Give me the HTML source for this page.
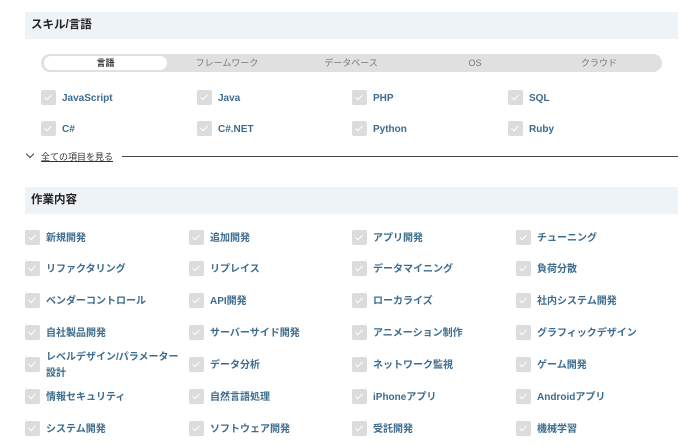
<!DOCTYPE html>
<html><head><meta charset="utf-8"><style>
body{margin:0;width:700px;height:447px;background:#fff;position:relative;overflow:hidden;font-family:"Liberation Sans","Noto Sans CJK JP",sans-serif}
.hd{position:absolute;left:25px;width:653px;height:27px;background:#eef3f8;font-size:11.5px;font-weight:bold;color:#222;line-height:27px;padding-left:6px;box-sizing:border-box}
.tabs{position:absolute;left:41px;top:54px;width:621px;height:18px;background:#e0e0e0;border-radius:9px}
.tab{position:absolute;top:0;width:124px;height:18px;line-height:18px;text-align:center;font-size:9px;color:#777}
.act{left:3px;top:2px;width:123px;height:14px;line-height:14px;background:#fff;border-radius:7px;color:#333;font-weight:bold}
.it{position:absolute;font-size:10px;font-weight:bold;color:#3d6c8e;line-height:15px}
.cb{position:absolute;width:15px;height:15px;background:#dcdcdc;border-radius:2px}
.cb:after{content:"";position:absolute;left:5px;top:3px;width:3px;height:6px;border:solid #fff;border-width:0 1.5px 1.5px 0;transform:rotate(45deg)}
</style></head><body>
<div class="hd" style="top:12px">スキル/言語</div>
<div class="tabs">
<div class="tab act">言語</div>
<div class="tab" style="left:124px">フレームワーク</div>
<div class="tab" style="left:248px">データベース</div>
<div class="tab" style="left:372px">OS</div>
<div class="tab" style="left:496px">クラウド</div>
</div>
<div style="position:absolute;left:27px;top:151px;width:5px;height:5px;border:solid #444;border-width:0 1px 1px 0;transform:rotate(45deg)"></div>
<div style="position:absolute;left:41px;top:151px;font-size:9px;color:#333;text-decoration:underline;line-height:12px">全ての項目を見る</div>
<div style="position:absolute;left:122px;top:156px;width:556px;height:1px;background:#444"></div>
<div class="hd" style="top:187px">作業内容</div>
<div id="wk"></div>
<script>
var s=[["JavaScript","Java","PHP","SQL"],["C#","C#.NET","Python","Ruby"]];
var sx=[41,197,352,508],sy=[97,128],h="";
s.forEach(function(r,i){r.forEach(function(t,j){h+='<div class="cb" style="left:'+sx[j]+'px;top:'+(sy[i]-7)+'px"></div><div class="it" style="left:'+(sx[j]+21)+'px;top:'+(sy[i]-6)+'px">'+t+'</div>'})});
var w=[["新規開発","追加開発","アプリ開発","チューニング"],["リファクタリング","リプレイス","データマイニング","負荷分散"],["ベンダーコントロール","API開発","ローカライズ","社内システム開発"],["自社製品開発","サーバーサイド開発","アニメーション制作","グラフィックデザイン"],["レベルデザイン/パラメーター<br>設計","データ分析","ネットワーク監視","ゲーム開発"],["情報セキュリティ","自然言語処理","iPhoneアプリ","Androidアプリ"],["システム開発","ソフトウェア開発","受託開発","機械学習"]];
var wx=[25,189,352,516],wy=[237,268,300,332,364,396,428];
w.forEach(function(r,i){r.forEach(function(t,j){var two=t.indexOf("<br>")>0;h+='<div class="cb" style="left:'+wx[j]+'px;top:'+(wy[i]-7)+'px"></div><div class="it" style="left:'+(wx[j]+21)+'px;top:'+(wy[i]-6-(two?8:0))+'px;line-height:'+(two?'16px':'15px')+'">'+t+'</div>'})});
document.getElementById("wk").innerHTML=h;
</script>
</body></html>
